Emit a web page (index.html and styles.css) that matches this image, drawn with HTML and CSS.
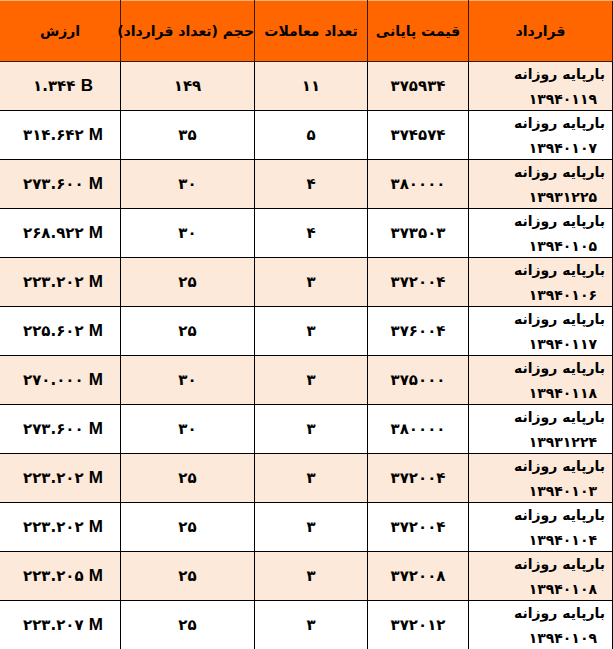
FILE: index.html
```html
<!DOCTYPE html>
<html lang="fa" dir="rtl">
<head>
<meta charset="utf-8">
<title>قرارداد</title>
<link rel="stylesheet" href="styles.css">
</head>
<body>
<table class="grid">
  <colgroup>
    <col class="c-contract"><col class="c-price"><col class="c-count"><col class="c-vol"><col class="c-val">
  </colgroup>
  <thead>
    <tr>
      <th>قرارداد</th>
      <th>قیمت پایانی</th>
      <th>تعداد معاملات</th>
      <th>حجم (تعداد قرارداد)</th>
      <th>ارزش</th>
    </tr>
  </thead>
  <tbody>
    <tr class="odd"><td class="name"><span class="l1">بارپایه روزانه</span><span class="l2">۱۳۹۴۰۱۱۹</span></td><td>۳۷۵۹۳۴</td><td>۱۱</td><td>۱۴۹</td><td class="val">۱.۳۴۴ <b>B</b></td></tr>
    <tr><td class="name"><span class="l1">بارپایه روزانه</span><span class="l2">۱۳۹۴۰۱۰۷</span></td><td>۳۷۴۵۷۴</td><td>۵</td><td>۳۵</td><td class="val">۳۱۴.۶۴۲ <b>M</b></td></tr>
    <tr class="odd"><td class="name"><span class="l1">بارپایه روزانه</span><span class="l2">۱۳۹۳۱۲۲۵</span></td><td>۳۸۰۰۰۰</td><td>۴</td><td>۳۰</td><td class="val">۲۷۳.۶۰۰ <b>M</b></td></tr>
    <tr><td class="name"><span class="l1">بارپایه روزانه</span><span class="l2">۱۳۹۴۰۱۰۵</span></td><td>۳۷۳۵۰۳</td><td>۴</td><td>۳۰</td><td class="val">۲۶۸.۹۲۲ <b>M</b></td></tr>
    <tr class="odd"><td class="name"><span class="l1">بارپایه روزانه</span><span class="l2">۱۳۹۴۰۱۰۶</span></td><td>۳۷۲۰۰۴</td><td>۳</td><td>۲۵</td><td class="val">۲۲۳.۲۰۲ <b>M</b></td></tr>
    <tr><td class="name"><span class="l1">بارپایه روزانه</span><span class="l2">۱۳۹۴۰۱۱۷</span></td><td>۳۷۶۰۰۴</td><td>۳</td><td>۲۵</td><td class="val">۲۲۵.۶۰۲ <b>M</b></td></tr>
    <tr class="odd"><td class="name"><span class="l1">بارپایه روزانه</span><span class="l2">۱۳۹۴۰۱۱۸</span></td><td>۳۷۵۰۰۰</td><td>۳</td><td>۳۰</td><td class="val">۲۷۰.۰۰۰ <b>M</b></td></tr>
    <tr><td class="name"><span class="l1">بارپایه روزانه</span><span class="l2">۱۳۹۳۱۲۲۴</span></td><td>۳۸۰۰۰۰</td><td>۳</td><td>۳۰</td><td class="val">۲۷۳.۶۰۰ <b>M</b></td></tr>
    <tr class="odd"><td class="name"><span class="l1">بارپایه روزانه</span><span class="l2">۱۳۹۴۰۱۰۳</span></td><td>۳۷۲۰۰۴</td><td>۳</td><td>۲۵</td><td class="val">۲۲۳.۲۰۲ <b>M</b></td></tr>
    <tr><td class="name"><span class="l1">بارپایه روزانه</span><span class="l2">۱۳۹۴۰۱۰۴</span></td><td>۳۷۲۰۰۴</td><td>۳</td><td>۲۵</td><td class="val">۲۲۳.۲۰۲ <b>M</b></td></tr>
    <tr class="odd"><td class="name"><span class="l1">بارپایه روزانه</span><span class="l2">۱۳۹۴۰۱۰۸</span></td><td>۳۷۲۰۰۸</td><td>۳</td><td>۲۵</td><td class="val">۲۲۳.۲۰۵ <b>M</b></td></tr>
    <tr><td class="name"><span class="l1">بارپایه روزانه</span><span class="l2">۱۳۹۴۰۱۰۹</span></td><td>۳۷۲۰۱۲</td><td>۳</td><td>۲۵</td><td class="val">۲۲۳.۲۰۷ <b>M</b></td></tr>
  </tbody>
</table>
</body>
</html>
```
FILE: styles.css
```css
html, body {
  margin: 0;
  padding: 0;
  background: #ffffff;
}
body {
  font-family: "DejaVu Sans", "Noto Sans", sans-serif;
  color: #000;
}
.grid {
  border-collapse: collapse;
  table-layout: fixed;
  width: 613px;
  direction: rtl;
}
.c-contract { width: 144px; }
.c-price { width: 101px; }
.c-count { width: 113px; }
.c-vol { width: 134px; }
.c-val { width: 121px; }

.grid th {
  background: #ff6600;
  height: 60px;
  padding: 0;
  border: 1px solid #3a1a08;
  border-top: 1px solid #f7b27f;
  font-size: 14px;
  font-weight: bold;
  text-align: center;
  vertical-align: middle;
  white-space: nowrap;
}
.grid th:last-child { border-left: 1px solid #f7b27f; }
.grid td {
  height: 48px;
  padding: 0;
  border: 1px solid #000;
  font-size: 15px;
  font-weight: bold;
  text-align: center;
  vertical-align: middle;
  white-space: nowrap;
  overflow: hidden;
}
.grid tr.odd td { background: #fde9d9; }
.grid td.name {
  text-align: right;
  vertical-align: top;
  padding-right: 7px;
  font-size: 14px;
}
.l1, .l2 {
  display: block;
  height: 22px;
  line-height: 22px;
}
.l1 { padding-top: 1px; }
.l2 {
  padding-right: 8px;
  padding-top: 3px;
  font-size: 14px;
  letter-spacing: -1.4px;
}
.grid td.val {
  direction: ltr;
  padding-left: 6px;
}
.val b {
  font-family: "Liberation Sans", Arial, sans-serif;
  font-size: 17px;
}
```
